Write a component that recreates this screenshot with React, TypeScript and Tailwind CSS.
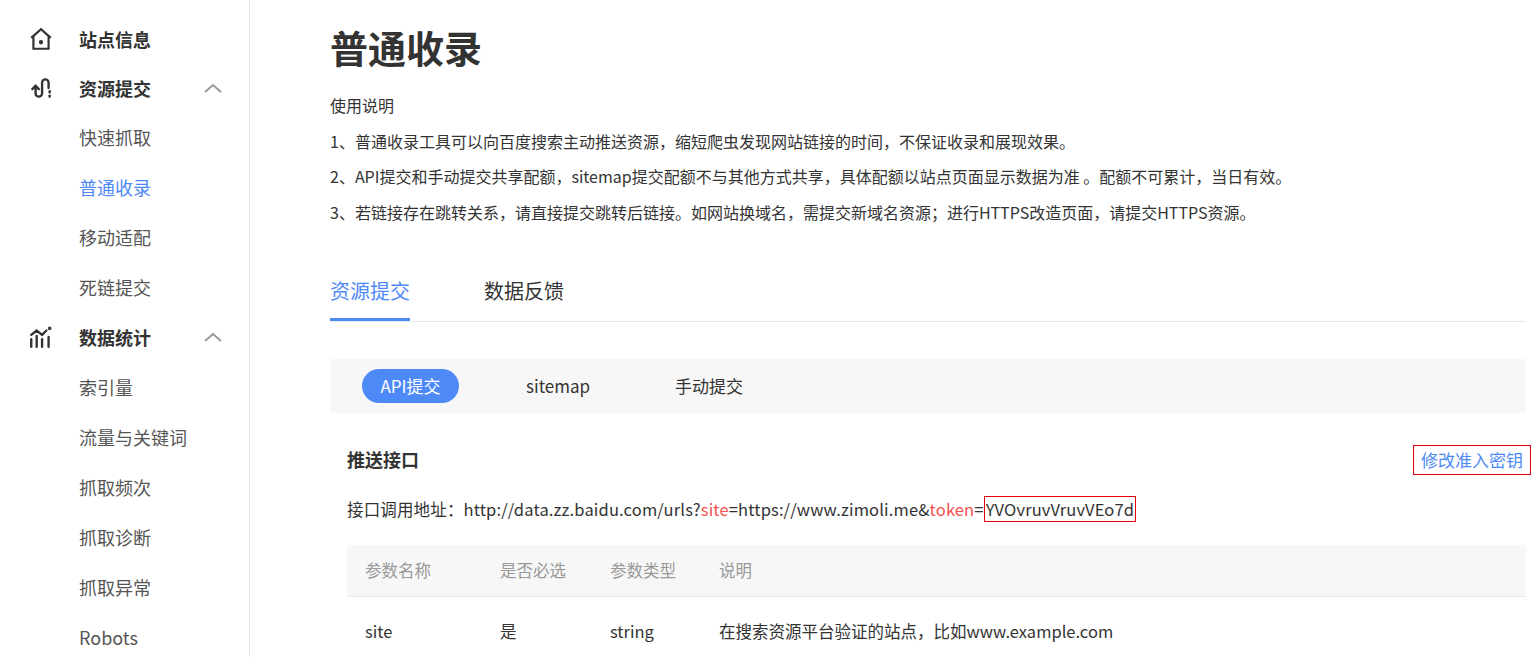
const font = { fontFamily: '"Noto Sans CJK SC", "Noto Sans", sans-serif' }

function HomeIcon() {
  return (
    <svg width="26" height="26" viewBox="0 0 24 24" fill="none" stroke="#333" strokeWidth="2">
      <path d="M3 11 L12 3 L21 11" />
      <path d="M5 10 V21 H19 V10" />
      <circle cx="12" cy="15" r="1" fill="#333" />
    </svg>
  )
}

function SubmitIcon() {
  return (
    <svg width="26" height="26" viewBox="0 0 24 24" fill="none" stroke="#333" strokeWidth="2.2" strokeLinecap="round">
      <path d="M4 13 L7 10 L10 13" />
      <path d="M7 10 V17 a3 3 0 0 0 6 0 V7 a3 3 0 0 1 6 0 V12" />
      <path d="M20 15 V16" />
      <path d="M20 19 V20" />
    </svg>
  )
}

function StatsIcon() {
  return (
    <svg width="26" height="26" viewBox="0 0 24 24" fill="none" stroke="#333" strokeWidth="2.2" strokeLinecap="round">
      <path d="M3 21 V14" />
      <path d="M8 21 V11" />
      <path d="M13 21 V14" />
      <path d="M19 21 V12" />
      <path d="M3 10 L8 6 L13 10 L17 6" />
      <circle cx="20" cy="4" r="0.6" fill="#333" />
    </svg>
  )
}

function Chevron() {
  return (
    <svg width="20" height="12" viewBox="0 0 20 12" fill="none" stroke="#999" strokeWidth="2">
      <path d="M2 10 L10 3 L18 10" />
    </svg>
  )
}

const subs1 = ["快速抓取", "普通收录", "移动适配", "死链提交"]
const subs2 = ["索引量", "流量与关键词", "抓取频次", "抓取诊断", "抓取异常", "Robots"]

export default function App() {
  return (
    <div className="flex h-[657px] overflow-hidden bg-white text-[#333]" style={font}>
      <aside className="w-[250px] shrink-0 border-r border-[#e8e8e8] pt-[14px]">
        <div className="flex h-[50px] items-center pl-[28px]">
          <HomeIcon />
          <span className="ml-[25px] text-[18px] font-bold">站点信息</span>
        </div>
        <div className="flex h-[48px] items-center pl-[28px] pr-[26px]">
          <SubmitIcon />
          <span className="ml-[25px] flex-1 text-[18px] font-bold">资源提交</span>
          <Chevron />
        </div>
        {subs1.map((s) => (
          <div key={s} className={`flex h-[50px] items-center pl-[79px] text-[18px] ${s === "普通收录" ? "text-[#4e89f8]" : "text-[#555]"}`}>
            {s}
          </div>
        ))}
        <div className="flex h-[50px] items-center pl-[28px] pr-[26px]">
          <StatsIcon />
          <span className="ml-[25px] flex-1 text-[18px] font-bold">数据统计</span>
          <Chevron />
        </div>
        {subs2.map((s) => (
          <div key={s} className="flex h-[50px] items-center pl-[79px] text-[18px] text-[#555]">
            {s}
          </div>
        ))}
      </aside>

      <main className="flex-1 pl-[80px] pr-[12px] pt-[20px]">
        <h1 className="text-[38px] font-bold leading-[54px]">普通收录</h1>
        <div className="mt-[14px] text-[16px] leading-[35.5px] text-[#333]">
          <p>使用说明</p>
          <p>1、普通收录工具可以向百度搜索主动推送资源，缩短爬虫发现网站链接的时间，不保证收录和展现效果。</p>
          <p>2、API提交和手动提交共享配额，sitemap提交配额不与其他方式共享，具体配额以站点页面显示数据为准 。配额不可累计，当日有效。</p>
          <p>3、若链接存在跳转关系，请直接提交跳转后链接。如网站换域名，需提交新域名资源；进行HTTPS改造页面，请提交HTTPS资源。</p>
        </div>

        <div className="mt-[46px] flex border-b border-[#e8e8e8] text-[20px]">
          <div className="border-b-[3px] border-[#4e89f8] pb-[12px] text-[#4e89f8]">资源提交</div>
          <div className="ml-[74px] pb-[12px]">数据反馈</div>
        </div>

        <div className="mt-[37px] flex h-[54px] items-center bg-[#f7f7f7] pl-[32px] text-[17px]">
          <span className="flex h-[34px] w-[97px] items-center justify-center rounded-full bg-[#4e89f8] text-white">API提交</span>
          <span className="ml-[67px]">sitemap</span>
          <span className="ml-[85px]">手动提交</span>
        </div>

        <div className="pl-[17px]">
          <div className="mt-[32px] flex items-center justify-between">
            <span className="text-[18px] font-bold">推送接口</span>
            <span className="mr-[-5px] border border-red-600 px-[7px] py-[1px] text-[17px] text-[#4e89f8]">修改准入密钥</span>
          </div>
          <div className="mt-[22px] text-[16.5px] tracking-[0.15px]">
            接口调用地址：http://data.zz.baidu.com/urls?<span className="text-[#f5514f]">site</span>=https://www.zimoli.me&amp;
            <span className="text-[#f5514f]">token</span>=<span className="border border-red-600 px-[1px]">YVOvruvVruvVEo7d</span>
          </div>
          <div className="mt-[24px] flex h-[52px] items-center border-b border-[#e8e8e8] bg-[#f7f7f7] text-[16.5px] text-[#999]">
            <span className="w-[153px] pl-[18px]">参数名称</span>
            <span className="w-[110px]">是否必选</span>
            <span className="w-[109px]">参数类型</span>
            <span>说明</span>
          </div>
          <div className="flex h-[68px] items-center text-[16.5px]">
            <span className="w-[153px] pl-[18px]">site</span>
            <span className="w-[110px]">是</span>
            <span className="w-[109px]">string</span>
            <span>在搜索资源平台验证的站点，比如www.example.com</span>
          </div>
        </div>
      </main>
    </div>
  )
}
